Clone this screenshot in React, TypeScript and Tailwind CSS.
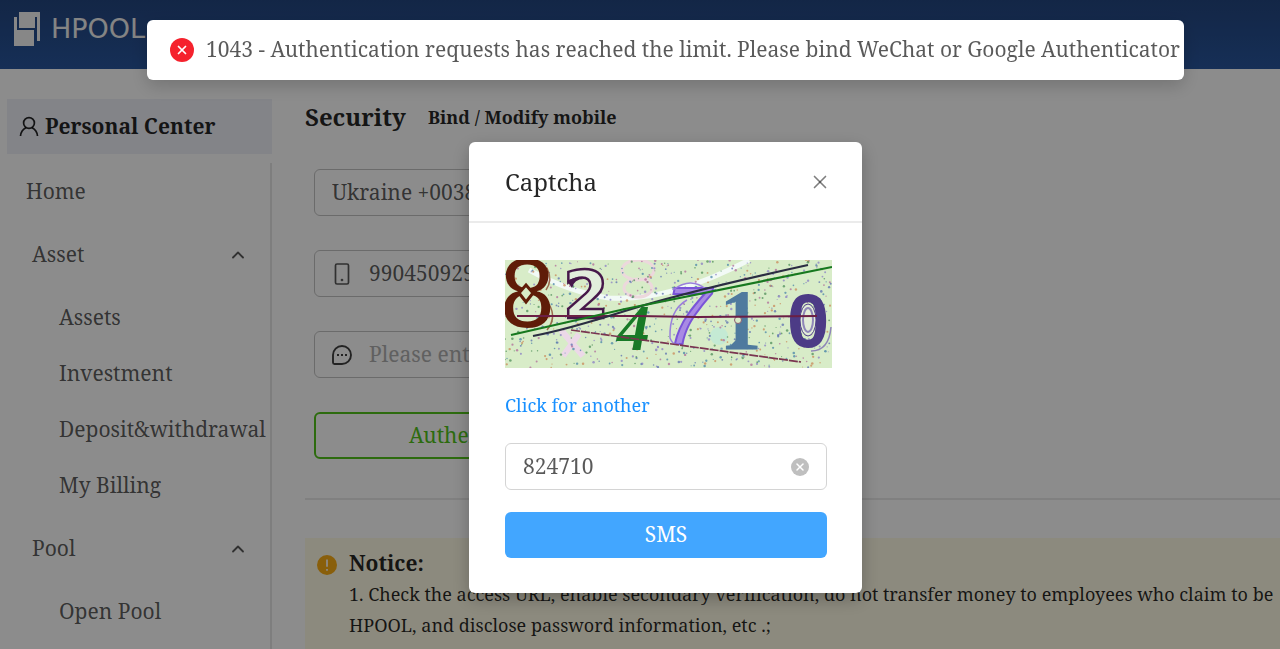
import { ChevronUp, X } from 'lucide-react';

const assetLinks = ['Assets', 'Investment', 'Deposit&withdrawal', 'My Billing'];
const poolLinks = ['Open Pool'];

const speckColors = ['#5b6fb0', '#4f8f5a', '#b06a9a', '#8a7fc4', '#c98a5a', '#4a86a8'];

// small repeatable generator, so the specks stay put between renders
function makeSpecks(count: number) {
  let seed = 7;
  const next = () => {
    seed = (seed * 16807) % 2147483647;
    return seed / 2147483647;
  };
  return Array.from({ length: count }, () => ({
    x: next() * 327,
    y: next() * 108,
    r: 0.5 + next() * 0.8,
    color: speckColors[Math.floor(next() * speckColors.length)],
  }));
}

const specks = makeSpecks(760);

function Logo() {
  return (
    <a href="#" aria-label="HPOOL" className="flex items-center gap-3">
      <svg width="28" height="37" viewBox="0 0 28 37" fill="#f6f6f6">
        <path d="M7 2h21v29h-3V7h-2v11H7z" />
        <path d="M2 7h3v13h17v16H2z" />
      </svg>
      <svg width="110" height="37" viewBox="0 0 110 37" aria-hidden="true">
        <text x="-1" y="28" fontSize="27" fill="#f0f0f0" fontFamily="DejaVu Sans, sans-serif">HPOOL</text>
      </svg>
    </a>
  );
}

function MenuGroup({ title, links }: { title: string; links: string[] }) {
  return (
    <li>
      <button type="button" className="flex h-[70px] w-full items-center justify-between pr-[22px] pl-8">
        {title}
        <ChevronUp size={20} strokeWidth={2.2} />
      </button>
      <ul>
        {links.map((link) => (
          <li key={link}>
            <a href="#" className="flex h-14 items-center pl-[59px] whitespace-nowrap">{link}</a>
          </li>
        ))}
      </ul>
    </li>
  );
}

function Sidebar() {
  return (
    <aside className="ml-[7px] w-[265px] shrink-0 pt-[30px]">
      <div className="flex h-[55px] items-center gap-1.5 bg-[#eef0f8] pl-3 font-bold text-black/85">
        <svg width="20" height="21" viewBox="0 0 20 21" fill="none" stroke="currentColor" strokeWidth="1.7">
          <circle cx="10" cy="7" r="5.4" />
          <path d="M1.500 20c.4-4.300 2.600-7 5.500-8.300M18.500 20c-.4-4.300-2.600-7-5.500-8.300" />
        </svg>
        Personal Center
      </div>
      <nav className="mt-[9px] h-[520px] border-r-2 border-[#e6e6e6]">
        <ul className="-ml-[7px] pt-px">
          <li>
            <a href="#" className="flex h-14 items-center pl-[26px]">Home</a>
          </li>
          <MenuGroup title="Asset" links={assetLinks} />
          <MenuGroup title="Pool" links={poolLinks} />
        </ul>
      </nav>
    </aside>
  );
}

function MobileForm() {
  return (
    <form className="ml-[9px] flex w-[318px] flex-col gap-[34px]">
      <select aria-label="Country code" className="h-[47px] appearance-none rounded-md border border-[#c4c4c4] px-[17px]">
        <option>Ukraine +00380</option>
      </select>
      <label className="flex h-[47px] items-center gap-4 rounded-md border border-[#c4c4c4] px-4">
        <svg width="22" height="22" viewBox="0 0 22 22" fill="none" stroke="currentColor" strokeWidth="1.7" className="shrink-0">
          <rect x="4.500" y="1" width="13" height="20" rx="1.500" />
          <circle cx="11" cy="17" r=".5" />
        </svg>
        <input aria-label="Mobile number" defaultValue="990450929" className="w-full outline-none" />
      </label>
      <label className="flex h-[47px] items-center gap-4 rounded-md border border-[#c4c4c4] px-4">
        <svg width="22" height="22" viewBox="0 0 22 22" fill="none" stroke="currentColor" strokeWidth="1.9" className="shrink-0 text-black/75">
          <path d="M2 11a9 9 0 1 1 9 9H3.500A1.500 1.500 0 0 1 2 18.500z" />
          <path d="M6 11h2M10 11h2M14 11h2" />
        </svg>
        <input aria-label="Verification code" placeholder="Please enter the code" className="w-full outline-none placeholder:text-[#b0b0b0]" />
      </label>
      <button type="button" className="h-[47px] rounded-md border-2 border-[#52c41a] text-[#52c41a]">Authenticate</button>
    </form>
  );
}

function Notice() {
  return (
    <section className="mt-[38px] flex gap-3 bg-[#fffbe6] pt-[10px] pr-1 pb-5 pl-3 text-black/85">
      <svg width="20" height="20" viewBox="0 0 20 20" className="mt-[7px] shrink-0">
        <circle cx="10" cy="10" r="10" fill="#faad14" />
        <path d="M10 4.500v7.200M10 14v1.800" stroke="#fff" strokeWidth="1.7" />
      </svg>
      <div className="leading-[31px]">
        <h3 className="font-bold">Notice:</h3>
        <ol className="text-[18px]">
          <li>1. Check the access URL, enable secondary verification, do not transfer money to employees who claim to be HPOOL, and disclose password information, etc .;</li>
          <li>2. After the mobile phone is modified, withdrawal is prohibited within 24 hours</li>
        </ol>
      </div>
    </section>
  );
}

function CaptchaImage() {
  return (
    <svg viewBox="0 0 327 108" className="block h-[108px] w-[327px]" role="img" aria-label="Captcha code">
      <rect width="327" height="108" fill="#d8ecc8" />
      <path d="M24 10q40 22 80 28 60 4 140-38" stroke="#f2faf6" strokeWidth="5" fill="none" />
      <g fill="none" stroke="#ecd8dc" strokeWidth="3">
        <ellipse cx="133" cy="10" rx="16" ry="10" />
        <ellipse cx="133" cy="28" rx="14" ry="9" />
      </g>
      <path d="M56 70l22 26M74 74L58 96" stroke="#ecd8e8" strokeWidth="6" />
      <circle cx="214" cy="76" r="9" fill="#c4ead4" />
      {specks.map((s, i) => (
        <circle key={i} cx={s.x} cy={s.y} r={s.r} fill={s.color} opacity="0.75" />
      ))}
      <g fontFamily="Liberation Sans, sans-serif">
        <path d="M42 8q6 12-1 22M44 44q8 14-2 26" fill="none" stroke="#9a6a4c" strokeWidth="1.5" />
        <text x="-5" y="67" fontSize="98" fill="#5f1c08">8</text>
        <path d="M21 25l7 8-7 9-7-9z" fill="#d8ecc8" stroke="#5f1c08" strokeWidth="3" />
        <text x="58" y="58" fontSize="66" fontWeight="700" fill="#e2eedc" stroke="#46184a" strokeWidth="2.5" fontFamily="DejaVu Sans, sans-serif">2</text>
        <path d="M62 21q10-6 17-2-10 0-12 9z" fill="#46184a" />
        <text x="112" y="90" fontSize="66" fontStyle="italic" fontWeight="700" fill="#187a26" fontFamily="Liberation Serif, serif">4</text>
        <text x="160" y="84" fontSize="82" fontStyle="italic" fill="#a88ae4" stroke="#7a54d8" strokeWidth="2">7</text>
        <path d="M182 40q-18 10-17 38 3 8 9 6M168 30q18-14 34 0" fill="none" stroke="#9a80dc" strokeWidth="1.5" />
        <text x="214" y="89" fontSize="86" fontWeight="700" fill="#4f7a9e" fontFamily="Liberation Serif, serif">1</text>
        <path d="M222 89l10-10h5l9 10z" fill="#4f7a9e" />
        <circle cx="233" cy="60" r="3.5" fill="#d8ecc8" stroke="#8a5a70" strokeWidth="1" />
        <path d="M306 91q18 0 20-24" fill="none" stroke="#8f86b8" strokeWidth="1.5" />
        <text x="282" y="87" fontSize="76" fontWeight="700" fill="#4c3b86">0</text>
        <ellipse cx="303" cy="60" rx="8" ry="16" fill="#e2ecd8" stroke="#4c3b86" strokeWidth="1" />
        <ellipse cx="303" cy="60" rx="5" ry="12" fill="none" stroke="#8f86b8" strokeWidth="2" />
      </g>
      <path d="M12 56h120l60 1 120-1" stroke="#6b1f45" strokeWidth="2" fill="none" />
      <path d="M66 70l230 32" stroke="#7a3550" strokeWidth="1.7" strokeDasharray="9 1" />
      <path d="M28 76Q60 70 120 51T303 5" stroke="#2b2d42" strokeWidth="2.2" fill="none" />
      <path d="M6 75L120 49 327 7" stroke="#17781f" strokeWidth="2.2" fill="none" />
    </svg>
  );
}

function CaptchaDialog() {
  return (
    <div role="dialog" aria-label="Captcha" className="w-[393px] rounded-md bg-white text-black/65 shadow-[0_6px_18px_rgba(0,0,0,0.25)]">
      <div className="flex h-[81px] items-center justify-between border-b-2 border-[#ebebeb] pr-[31px] pl-9">
        <h2 className="text-2xl text-black/85">Captcha</h2>
        <button type="button" aria-label="Close" className="text-black/50">
          <X size={22} strokeWidth={1.8} />
        </button>
      </div>
      <div className="px-[35px] pt-[37px] pb-[35px]">
        <div className="ml-px w-[322px]">
          <CaptchaImage />
          <a href="#" className="mt-[23px] block text-[18px] leading-7 text-[#1890ff]">Click for another</a>
          <div className="mt-6 flex h-[47px] items-center rounded-md border border-[#d4d4d4] px-[17px]">
            <input aria-label="Captcha code" defaultValue="824710" className="min-w-0 flex-1 outline-none" />
            <button type="button" aria-label="Clear" className="flex size-[18px] items-center justify-center rounded-full bg-[#bfbfbf] text-white">
              <X size={12} strokeWidth={3} />
            </button>
          </div>
          <button type="button" className="mt-[22px] h-[46px] w-full rounded-md bg-[#42a6ff] text-white">SMS</button>
        </div>
      </div>
    </div>
  );
}

export default function App() {
  return (
    <div className="h-screen overflow-hidden bg-white font-['Noto_Serif','Droid_Serif','Liberation_Serif',serif] text-[21px] text-black/65">
      <header className="flex h-[69px] items-start bg-linear-to-b from-[#244680] to-[#28569e] pt-[10px] pl-3">
        <Logo />
      </header>
      <div className="flex">
        <Sidebar />
        <main className="ml-[33px] min-w-0 flex-1 pt-[30px]">
          <div className="mb-[34px] flex h-9 items-center gap-[22px] font-bold text-black/85">
            <h1 className="text-2xl">Security</h1>
            <h2 className="text-[18px]">Bind / Modify mobile</h2>
          </div>
          <MobileForm />
          <hr className="mt-[39px] border-t-2 border-[#eaeaea]" />
          <Notice />
        </main>
      </div>

      <div className="fixed inset-0 flex items-start justify-center bg-black/45 pt-[142px] pl-[51px]">
        <CaptchaDialog />
      </div>

      <div className="pointer-events-none fixed inset-x-0 top-5 flex justify-center pl-[51px]">
        <div role="alert" className="flex h-[60px] w-[1037px] items-center gap-3 rounded-md bg-white px-[23px] shadow-[0_6px_18px_rgba(0,0,0,0.18)]">
          <span className="flex size-6 shrink-0 items-center justify-center rounded-full bg-[#f5222d] text-white">
            <X size={14} strokeWidth={3} />
          </span>
          <p className="whitespace-nowrap">1043 - Authentication requests has reached the limit. Please bind WeChat or Google Authenticator</p>
        </div>
      </div>
    </div>
  );
}
